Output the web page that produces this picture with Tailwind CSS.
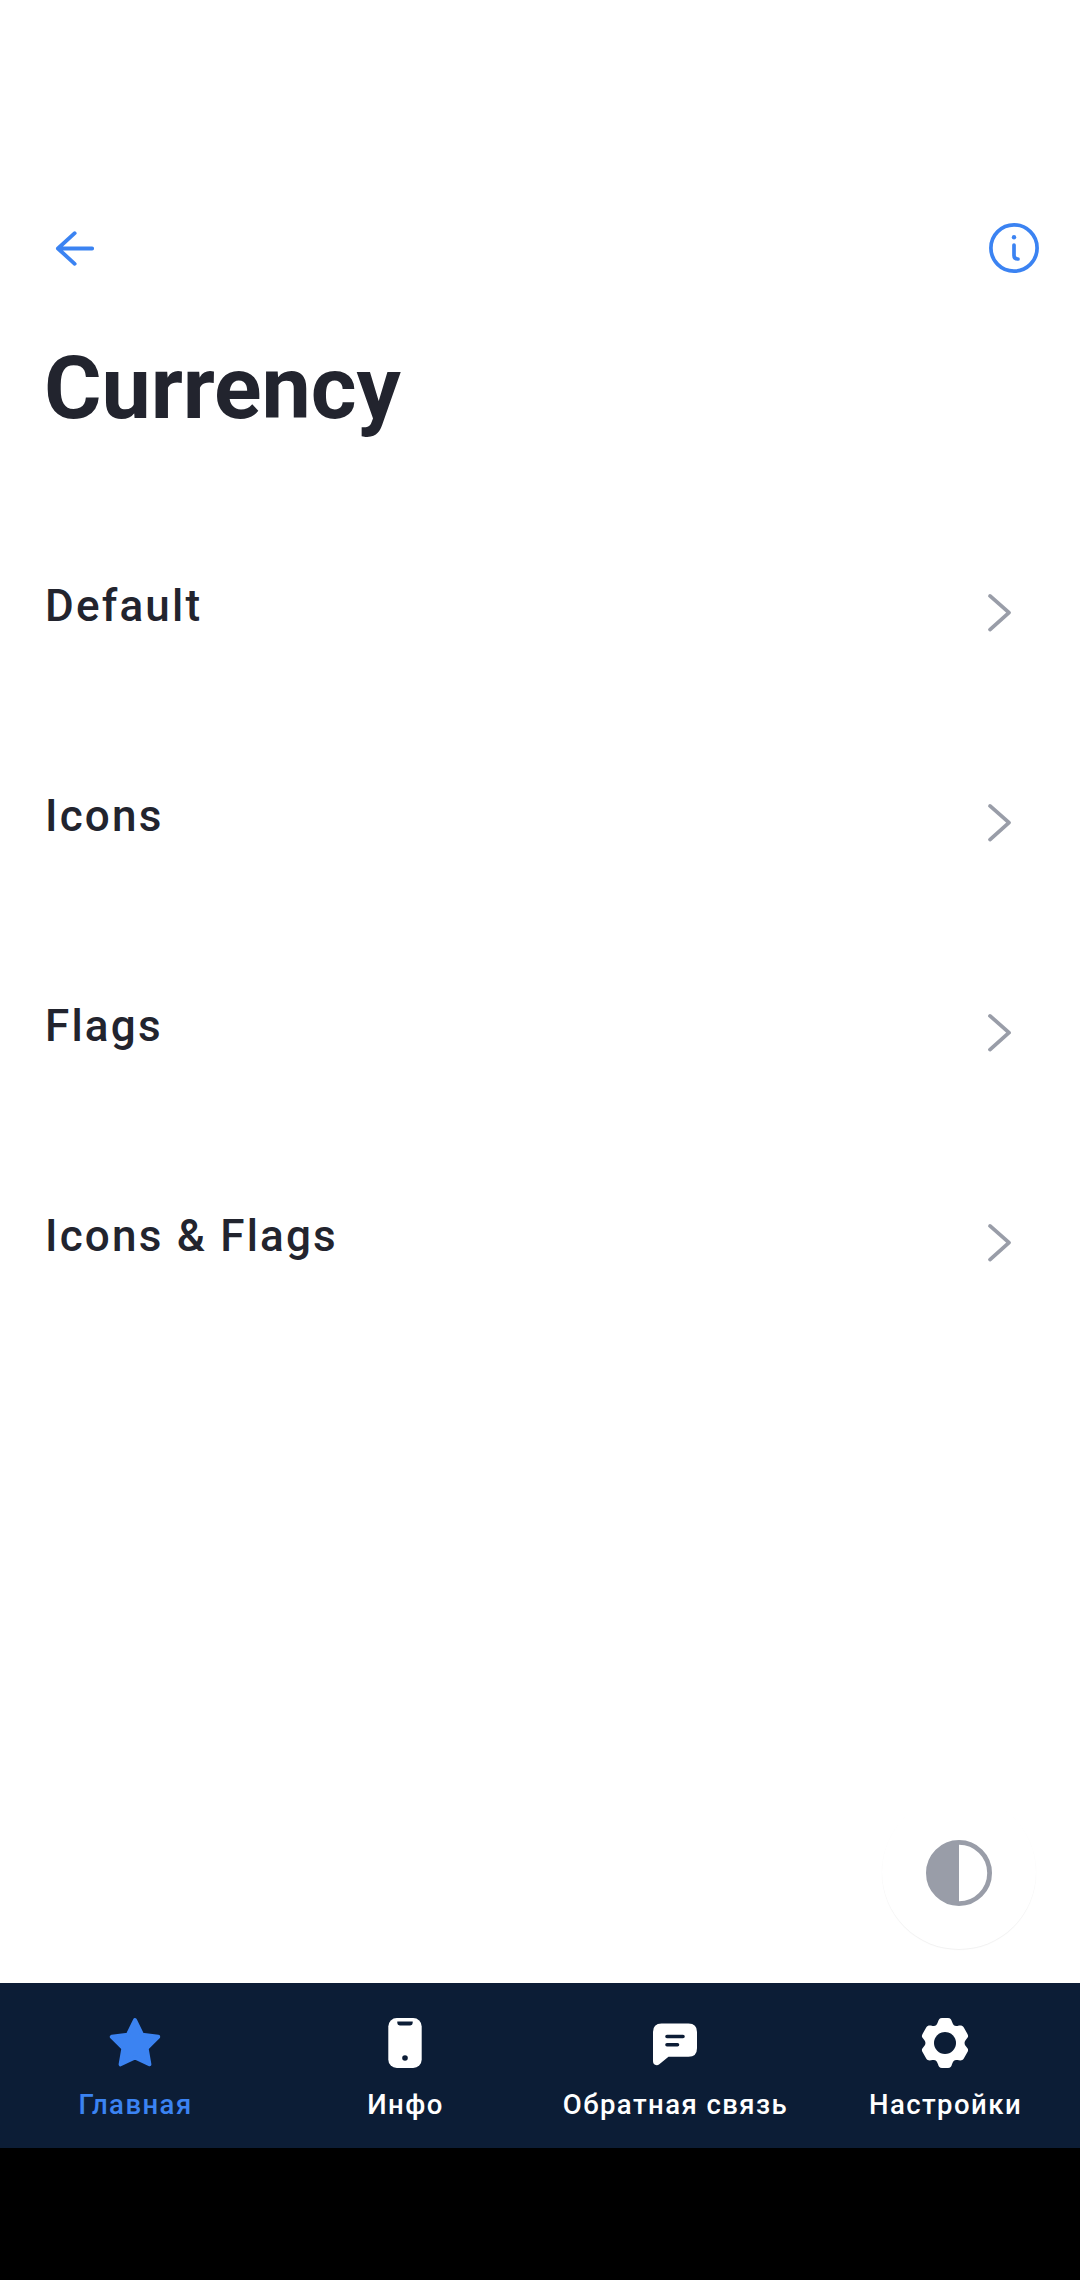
<!DOCTYPE html>
<html lang="ru">
<head>
<meta charset="utf-8">
<title>Currency</title>
<script src="https://cdn.jsdelivr.net/npm/@tailwindcss/browser@4"></script>
</head>
<body class="flex h-[2280px] w-[1080px] flex-col overflow-hidden bg-white font-['Roboto',sans-serif] text-[#22242e]">
  <header class="flex items-center justify-between pt-[215px] pr-[33px] pl-[42px] text-[#3b83f2]">
    <svg class="size-[66px]" viewBox="0 0 66 66" fill="none" stroke="currentColor" stroke-width="3.8" stroke-linecap="round" stroke-linejoin="round"><path d="M50.2 33.5H15.9M32.7 18.2L15.9 33.5L32.7 48.8"/></svg>
    <svg class="size-[66px]" viewBox="0 0 66 66" fill="none" stroke="currentColor" stroke-width="3.7" stroke-linecap="round"><circle cx="33" cy="33" r="23.1"/><path d="M33 30V40.5Q33 44 37 44"/><circle cx="33" cy="22.3" r="2.2" fill="currentColor" stroke="none"/></svg>
  </header>
  <main class="flex flex-1 flex-col">
    <h1 class="mt-[57px] ml-[44px] text-[88px] leading-[100px] font-bold tracking-[-0.1px]">Currency</h1>
    <ul class="mt-[70px] flex flex-col">
      <li class="flex h-[210px] items-center justify-between pr-[47px] pl-[45px]">
        <span class="-mt-[14px] text-[44px] leading-[52px] font-medium tracking-[2.2px]">Default</span>
        <svg class="size-[66px] text-[#999da8]" viewBox="0 0 66 66" fill="none" stroke="currentColor" stroke-width="3.8" stroke-linecap="round" stroke-linejoin="round"><path d="M23 15.9L42 32.7L23 49.6"/></svg>
      </li>
      <li class="flex h-[210px] items-center justify-between pr-[47px] pl-[45px]">
        <span class="-mt-[14px] text-[44px] leading-[52px] font-medium tracking-[2.2px]">Icons</span>
        <svg class="size-[66px] text-[#999da8]" viewBox="0 0 66 66" fill="none" stroke="currentColor" stroke-width="3.8" stroke-linecap="round" stroke-linejoin="round"><path d="M23 15.9L42 32.7L23 49.6"/></svg>
      </li>
      <li class="flex h-[210px] items-center justify-between pr-[47px] pl-[45px]">
        <span class="-mt-[14px] text-[44px] leading-[52px] font-medium tracking-[2.2px]">Flags</span>
        <svg class="size-[66px] text-[#999da8]" viewBox="0 0 66 66" fill="none" stroke="currentColor" stroke-width="3.8" stroke-linecap="round" stroke-linejoin="round"><path d="M23 15.9L42 32.7L23 49.6"/></svg>
      </li>
      <li class="flex h-[210px] items-center justify-between pr-[47px] pl-[45px]">
        <span class="-mt-[14px] text-[44px] leading-[52px] font-medium tracking-[2.2px]">Icons &amp; Flags</span>
        <svg class="size-[66px] text-[#999da8]" viewBox="0 0 66 66" fill="none" stroke="currentColor" stroke-width="3.8" stroke-linecap="round" stroke-linejoin="round"><path d="M23 15.9L42 32.7L23 49.6"/></svg>
      </li>
    </ul>
    <button class="mt-auto mr-[44px] mb-[34px] flex size-[154px] items-center justify-center self-end rounded-full bg-white pt-[2px] text-[#999da8] shadow-[0_1px_1px_rgba(0,0,0,0.06)]">
      <svg class="size-[66px]" viewBox="0 0 66 66"><circle cx="33" cy="33" r="30.6" fill="none" stroke="currentColor" stroke-width="4.8"/><path d="M33 1A32 32 0 0 0 33 65Z" fill="currentColor"/></svg>
    </button>
  </main>
  <nav class="grid h-[165px] shrink-0 grid-cols-4 bg-[#0c1d36] text-[27.5px] leading-[32px] font-medium tracking-[1.45px] text-white">
    <a class="flex flex-col items-center pt-[27px] text-[#3b83f2]">
      <svg class="size-[66px]" viewBox="0 0 66 66" fill="currentColor" stroke="currentColor" stroke-width="4" stroke-linejoin="round"><path d="M33 10L40.2 24.8L56.2 26.8L44.6 38.2L47.4 54.3L33 47.4L18.6 54.3L21.4 38.2L9.8 26.8L25.8 24.8Z"/></svg>
      <span class="mt-[13px] pl-px whitespace-nowrap">Главная</span>
    </a>
    <a class="flex flex-col items-center pt-[27px]">
      <svg class="size-[66px]" viewBox="0 0 66 66" fill="currentColor"><rect x="16.3" y="8" width="33.4" height="50" rx="8.5"/><path d="M25.3 11.6H40.7V13Q40.7 15.4 38.2 15.4H27.8Q25.3 15.4 25.3 13Z" fill="#0c1d36"/><circle cx="33" cy="48" r="2.8" fill="#0c1d36"/></svg>
      <span class="mt-[13px] pl-px whitespace-nowrap">Инфо</span>
    </a>
    <a class="flex flex-col items-center pt-[27px]">
      <svg class="size-[66px]" viewBox="0 0 66 66" fill="currentColor"><path d="M19.5 13.5H46.5Q55 13.5 55 22V38.2Q55 46.7 46.5 46.7H26.5L17.3 54.2Q15.6 55.5 13.8 55Q11 54.3 11 51V22Q11 13.5 19.5 13.5Z"/><path d="M25 26.5H41M25 34.8H35.5" fill="none" stroke="#0c1d36" stroke-width="3.6" stroke-linecap="round"/></svg>
      <span class="mt-[13px] pl-px whitespace-nowrap">Обратная связь</span>
    </a>
    <a class="flex flex-col items-center pt-[27px]">
      <svg class="size-[66px]" viewBox="0 0 66 66" fill="currentColor"><path d="M30 8H36C38.5 8 39.2 9.3 40 11.8C41 15 42.5 16.5 45.5 15.9C48.5 15.3 50.3 15.2 51.8 17.5L55.2 23.4C56.8 26 56.2 27 54.3 29.2C52 31.8 52 34.2 54.3 36.8C56.2 39 56.8 40 55.2 42.6L51.8 48.5C50.3 50.8 48.5 50.7 45.5 50.1C42.5 49.5 41 51 40 54.2C39.2 56.7 38.5 58 36 58H30C27.5 58 26.8 56.7 26 54.2C25 51 23.5 49.5 20.5 50.1C17.5 50.7 15.7 50.8 14.2 48.5L10.8 42.6C9.2 40 9.8 39 11.7 36.8C14 34.2 14 31.8 11.7 29.2C9.8 27 9.2 26 10.8 23.4L14.2 17.5C15.7 15.2 17.5 15.3 20.5 15.9C23.5 16.5 25 15 26 11.8C26.8 9.3 27.5 8 30 8Z"/><circle cx="33" cy="33" r="11" fill="#0c1d36"/></svg>
      <span class="mt-[13px] pl-px whitespace-nowrap">Настройки</span>
    </a>
  </nav>
  <footer class="h-[132px] shrink-0 bg-black"></footer>
</body>
</html>
